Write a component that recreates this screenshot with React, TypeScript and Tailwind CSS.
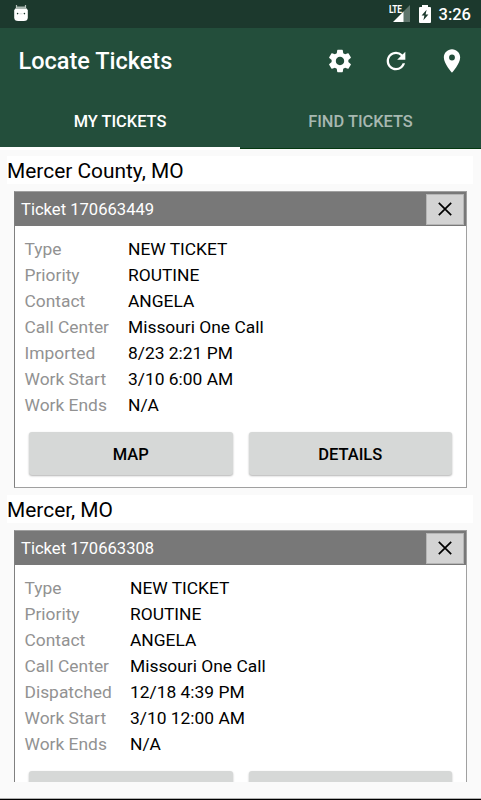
import { MdSettings, MdRefresh, MdPlace } from "react-icons/md"

type Ticket = {
   id: string
   place: string
   labelWidth: string
   fields: [string, string][]
}

const tickets: Ticket[] = [
   {
      id: '170663449',
      place: 'Mercer County, MO',
      labelWidth: 'w-[103.5px]',
      fields: [
         ['Type', 'NEW TICKET'],
         ['Priority', 'ROUTINE'],
         ['Contact', 'ANGELA'],
         ['Call Center', 'Missouri One Call'],
         ['Imported', '8/23 2:21 PM'],
         ['Work Start', '3/10 6:00 AM'],
         ['Work Ends', 'N/A']
      ]
   },
   {
      id: '170663308',
      place: 'Mercer, MO',
      labelWidth: 'w-[105.5px]',
      fields: [
         ['Type', 'NEW TICKET'],
         ['Priority', 'ROUTINE'],
         ['Contact', 'ANGELA'],
         ['Call Center', 'Missouri One Call'],
         ['Dispatched', '12/18 4:39 PM'],
         ['Work Start', '3/10 12:00 AM'],
         ['Work Ends', 'N/A']
      ]
   }
]

function StatusBar() {
   return (
      <div className="flex h-7 shrink-0 items-center bg-[#1c392d] pr-[10px] pl-[13px] text-white">
         <svg className="mb-[2px] h-[18px] w-4" viewBox="0 0 16 18">
            <path d="M3.5 1v4M12.5 1v4" stroke="#b5c0bb" strokeWidth="1.2" />
            <path d="M4 3h8l2.8 3v7.5q0 3.5-4 3.5H5.2q-4 0-4-3.5V6z" fill="#fff" />
            <path d="M4 2.5h8l1.5 2.5h-11z" fill="#aab7b1" />
            <circle cx="4.6" cy="9.6" r=".8" fill="#1c392d" />
            <circle cx="11.4" cy="9.6" r=".8" fill="#1c392d" />
            <path d="M6.5 9.8h3" stroke="#c5ccc9" strokeWidth=".7" />
         </svg>
         <div className="ml-auto flex items-center">
            <div className="relative h-[18px] w-[22px]">
               <span className="absolute top-0 left-[1px] origin-left scale-x-80 text-[10.5px] leading-[9px] font-bold tracking-[-0.4px]">LTE</span>
               <svg className="absolute right-0 bottom-[1px] h-[17px] w-[17px]" viewBox="0 0 17 17">
                  <path d="M17 0v17H10V7z" fill="#5f756c" />
                  <path d="M10.5 6.5V17H0z" fill="#fff" />
               </svg>
            </div>
            <svg className="mb-[1px] ml-[9px] h-[18px] w-3" viewBox="0 0 12 18">
               <path d="M3 0h6v2h2q1 0 1 1v14q0 1-1 1H1q-1 0-1-1V3q0-1 1-1h2z" fill="#fff" />
               <path d="M7.6 4.8 2.6 10.4h2.8l-1 4.8 5-5.6H6.6z" fill="#1c392d" />
            </svg>
            <span className="ml-2 pt-[1px] text-[16.5px] leading-5 font-medium">3:26</span>
         </div>
      </div>
   )
}

function TicketCard({ ticket }: { ticket: Ticket }) {
   return (
      <section>
         <h2 className="mr-2 ml-[7px] h-[28.5px] bg-white text-[20.9px] leading-[30px]">{ticket.place}</h2>
         <div className="mt-[7px] mr-[14px] ml-[14px] h-[297px] border border-[#a0a0a0] border-l-[#808080] bg-white">
            <div className="flex h-[34px] items-center bg-[#787878] pr-[2px] pl-[6px]">
               <h3 className="pt-[2px] text-[16.6px] text-white">Ticket {ticket.id}</h3>
               <button
                  type="button"
                  className="ml-auto flex h-[31px] w-[38px] cursor-pointer items-center justify-center border border-[#b5b5b5] bg-[#d3d3d3]"
               >
                  <svg className="size-[14px]" viewBox="0 0 14 14" stroke="currentColor" strokeWidth="1.7">
                     <path d="M.8.8l12.4 12.4M13.2.8.8 13.2" />
                  </svg>
               </button>
            </div>

            <dl className="mt-[10px] ml-[9.5px] text-[17.4px] leading-[26px]">
               {ticket.fields.map(([label, value]) => (
                  <div key={label} className="flex h-[26px]">
                     <dt className={`text-[#929292] ${ticket.labelWidth}`}>{label}</dt>
                     <dd>{value}</dd>
                  </div>
               ))}
            </dl>

            <div className="mt-[14px] flex gap-4 pr-[14px] pl-[14px] text-[16.5px] font-medium">
               <button type="button" className="h-[43px] flex-1 cursor-pointer rounded-[3px] bg-[#d6d8d7] pt-[3px] shadow-[0_1px_2px_rgba(0,0,0,0.3)]">MAP</button>
               <button type="button" className="h-[43px] flex-1 cursor-pointer rounded-[3px] bg-[#d6d8d7] pt-[3px] shadow-[0_1px_2px_rgba(0,0,0,0.3)]">DETAILS</button>
            </div>
         </div>
      </section>
   )
}

function App() {
   return (
      <div className="flex h-screen flex-col overflow-hidden bg-[#fafafa] font-['Roboto',sans-serif] text-black">
         <StatusBar />

         <header className="h-[121px] shrink-0 bg-[#234e3b] text-white">
            <div className="flex h-[66px] items-center pr-[15px] pl-[18.5px]">
               <h1 className="pt-[2px] text-[23.5px] font-medium">Locate Tickets</h1>
               <div className="ml-auto flex gap-7">
                  <MdSettings className="size-7" />
                  <MdRefresh className="size-7" />
                  <MdPlace className="size-7" />
               </div>
            </div>
            <nav className="flex h-[55px] text-[16.4px] font-medium">
               <button type="button" className="h-[56px] w-[240px] border-b-[3px] border-white pt-[4px]">MY TICKETS</button>
               <button type="button" className="flex-1 border-b border-[#043810] pt-[3px] text-[#a7b8b1]">FIND TICKETS</button>
            </nav>
         </header>

         <main className="h-[633px] shrink-0 space-y-[6.5px] overflow-hidden pt-[6.5px]">
            {tickets.map(t => <TicketCard key={t.id} ticket={t} />)}
         </main>

         <div className="mt-auto h-[2px] shrink-0 border-t border-[#b0b0b0] bg-black" />
      </div>
   )
}

export default App
